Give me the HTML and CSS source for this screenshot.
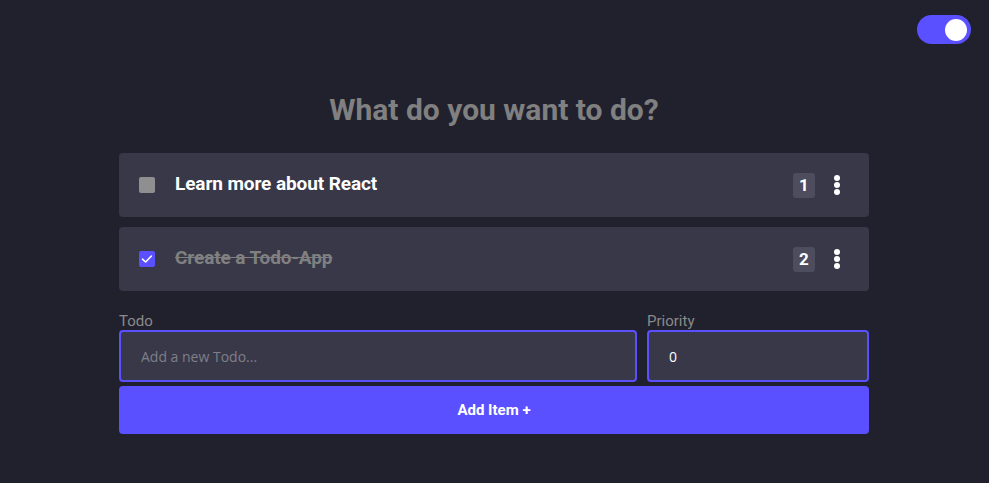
FILE: index.html
```html
<!DOCTYPE html>
<html>
<head>
<meta charset="utf-8">
<link rel="stylesheet" href="styles.css">
</head>
<body>
<div class="topbar">
  <div class="toggle"><div class="knob"></div></div>
</div>
<main class="app">
  <h1 class="title">What do you want to do?</h1>
  <div class="list">
    <div class="item">
      <span class="check"></span>
      <span class="text">Learn more about React</span>
      <span class="badge">1</span>
      <span class="dots"><i></i><i></i><i></i></span>
    </div>
    <div class="item">
      <span class="check checked"><svg viewBox="0 0 16 16" width="16" height="16"><path d="M3.5 8.2 L6.6 11 L12.4 5" fill="none" stroke="#fff" stroke-width="1.6" stroke-linecap="round" stroke-linejoin="round"/></svg></span>
      <span class="text done">Create a Todo-App</span>
      <span class="badge">2</span>
      <span class="dots"><i></i><i></i><i></i></span>
    </div>
  </div>
  <form class="form">
    <div class="fields">
      <label class="field grow">
        <span class="label">Todo</span>
        <input class="input" type="text" placeholder="Add a new Todo...">
      </label>
      <label class="field prio">
        <span class="label">Priority</span>
        <input class="input" type="text" value="0">
      </label>
    </div>
    <button class="btn" type="button">Add Item +</button>
  </form>
</main>
</body>
</html>
```
FILE: styles.css
```css
* { box-sizing: border-box; }
html, body { margin: 0; padding: 0; }
body {
  background: #21212d;
  font-family: Roboto, "Liberation Sans", sans-serif;
  height: 483px;
  overflow: hidden;
}
.topbar {
  display: flex;
  justify-content: flex-end;
  padding: 15px 18px 0 0;
}
.toggle {
  width: 54px;
  height: 29px;
  border-radius: 15px;
  background: #5a50ff;
  display: flex;
  align-items: center;
  justify-content: flex-end;
  padding-right: 4px;
}
.knob {
  width: 22px;
  height: 22px;
  border-radius: 50%;
  background: #fff;
}
.app {
  width: 750px;
  margin: 0 0 0 119px;
}
.title {
  margin: 49px 0 26px;
  text-align: center;
  color: #808080;
  font-size: 30px;
  font-weight: 700;
  line-height: 34px;
}
.list {
  display: flex;
  flex-direction: column;
  gap: 10px;
}
.item {
  height: 64px;
  background: #383849;
  border-radius: 4px;
  display: flex;
  align-items: center;
  padding: 0 29px 0 20px;
}
.check {
  width: 16px;
  height: 16px;
  border-radius: 2px;
  background: #8f8f8f;
  flex: none;
  display: block;
}
.check svg { display: block; }
.check.checked { background: #5a50ff; }
.text {
  margin-left: 20px;
  flex: 1;
  color: #fff;
  font-weight: 700;
  font-size: 19px;
  letter-spacing: -0.1px;
  padding-bottom: 3px;
}
.text.done {
  color: #808080;
  text-decoration: line-through;
}
.badge {
  width: 22px;
  height: 25px;
  border-radius: 3px;
  background: #4d4d5e;
  color: #fff;
  font-weight: 700;
  font-size: 17px;
  display: flex;
  align-items: center;
  justify-content: center;
}
.dots {
  margin-left: 19px;
  display: flex;
  flex-direction: column;
  gap: 1px;
  width: 6px;
}
.dots i {
  width: 6px;
  height: 6px;
  border-radius: 50%;
  background: #fff;
  display: block;
}
.form { margin-top: 21px; }
.fields {
  display: flex;
  gap: 10px;
}
.field {
  display: flex;
  flex-direction: column;
}
.field.grow { flex: 1; }
.field.prio { width: 222px; }
.label {
  color: #8a8a8a;
  font-size: 15px;
  line-height: 18px;
  margin-bottom: 0;
}
.input {
  height: 52px;
  background: #383849;
  border: 2px solid #5a50ff;
  border-radius: 4px;
  padding: 0 20px;
  color: #fff;
  font-family: "Open Sans", Roboto, sans-serif;
  font-size: 14px;
  outline: none;
}
.input::placeholder { color: #7f7f88; }
.btn {
  margin-top: 4px;
  width: 100%;
  height: 48px;
  border: none;
  border-radius: 4px;
  background: #5a50ff;
  color: #fff;
  font-family: Roboto, sans-serif;
  font-weight: 700;
  font-size: 15px;
}
```
